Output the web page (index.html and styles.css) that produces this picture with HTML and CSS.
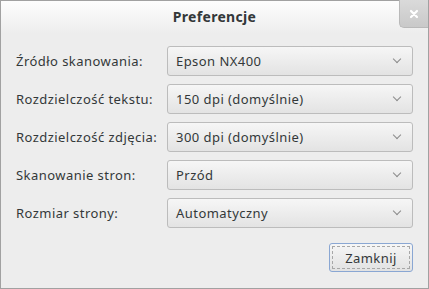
FILE: index.html
```html
<!DOCTYPE html>
<html lang="pl">
<head>
  <meta charset="UTF-8" />
  <title>Preferencje</title>
  <link rel="stylesheet" href="styles.css">
</head>
<body>
  <div class="dialog">
    <div class="titlebar">
      <div class="title">Preferencje</div>
      <button class="close-btn" aria-label="Zamknij">
        <svg width="10" height="10" viewBox="0 0 10 10"><path d="M2 2 L8 8 M8 2 L2 8" stroke="#fff" stroke-width="2.2" stroke-linecap="round"/></svg>
      </button>
    </div>
    <div class="content">
      <div class="form">
        <label>Źródło skanowania:</label>
        <div class="combo"><span>Epson NX400</span><i class="chev"></i></div>
        <label>Rozdzielczość tekstu:</label>
        <div class="combo"><span>150 dpi (domyślnie)</span><i class="chev"></i></div>
        <label>Rozdzielczość zdjęcia:</label>
        <div class="combo"><span>300 dpi (domyślnie)</span><i class="chev"></i></div>
        <label>Skanowanie stron:</label>
        <div class="combo"><span>Przód</span><i class="chev"></i></div>
        <label>Rozmiar strony:</label>
        <div class="combo"><span>Automatyczny</span><i class="chev"></i></div>
      </div>
      <div class="actions">
        <button class="btn"><span>Zamknij</span></button>
      </div>
    </div>
  </div>
</body>
</html>
```

FILE: styles.css
```css
:root {
  --bg: #ededed;
  --text: #333839;
  --border: #a1a1a1;
  --font: 'Noto Sans', 'DejaVu Sans', sans-serif;
}
* { box-sizing: border-box; }
body {
  margin: 0;
  font-family: var(--font);
  color: var(--text);
  background: var(--bg);
}
.dialog {
  width: 429px;
  height: 289px;
  border: 1px solid var(--border);
  background: var(--bg);
  display: flex;
  flex-direction: column;
}
.titlebar {
  position: relative;
  height: 33px;
  background: linear-gradient(#fdfdfd, #ededed);
  display: flex;
  justify-content: center;
  align-items: center;
}
.title {
  font-weight: 700;
  font-size: 14px;
  letter-spacing: 0.3px;
  margin-top: -2px;
}
.close-btn {
  position: absolute;
  top: -1px;
  right: 0;
  width: 29px;
  height: 28px;
  border: none;
  border-left: 1px solid #b9b9b9;
  border-bottom: 1px solid #b9b9b9;
  border-bottom-left-radius: 5px;
  background: linear-gradient(#dadada, #c9c9c9);
  display: flex;
  align-items: center;
  justify-content: center;
  padding: 0;
}
.content {
  flex: 1;
  padding: 12px 15px 0 15px;
  display: flex;
  flex-direction: column;
}
.form {
  display: grid;
  grid-template-columns: 151px 1fr;
  row-gap: 8px;
  align-items: center;
}
.form label, .combo {
  font-size: 13px;
  letter-spacing: 0.45px;
}
.combo {
  height: 30px;
  border: 1px solid #bcbcbc;
  border-radius: 3px;
  background: linear-gradient(#f6f6f6, #e3e3e3);
  display: flex;
  align-items: center;
  justify-content: space-between;
  padding: 0 12px 0 8px;
}
.chev {
  width: 6px;
  height: 6px;
  border-right: 1.5px solid #8b8b8b;
  border-bottom: 1.5px solid #8b8b8b;
  transform: rotate(45deg);
  margin-top: -4px;
}
.actions {
  display: flex;
  justify-content: flex-end;
  margin-top: 15px;
}
.btn {
  width: 84px;
  height: 29px;
  padding: 2px;
  border: 1px solid #8aa7d3;
  border-radius: 3px;
  background: linear-gradient(#f6f6f6, #e2e2e2);
  font-family: var(--font);
  font-size: 13px;
  letter-spacing: 0.45px;
  color: var(--text);
}
.btn span {
  display: flex;
  align-items: center;
  justify-content: center;
  height: 100%;
  border: 1px dashed #a7a7a7;
}
```
